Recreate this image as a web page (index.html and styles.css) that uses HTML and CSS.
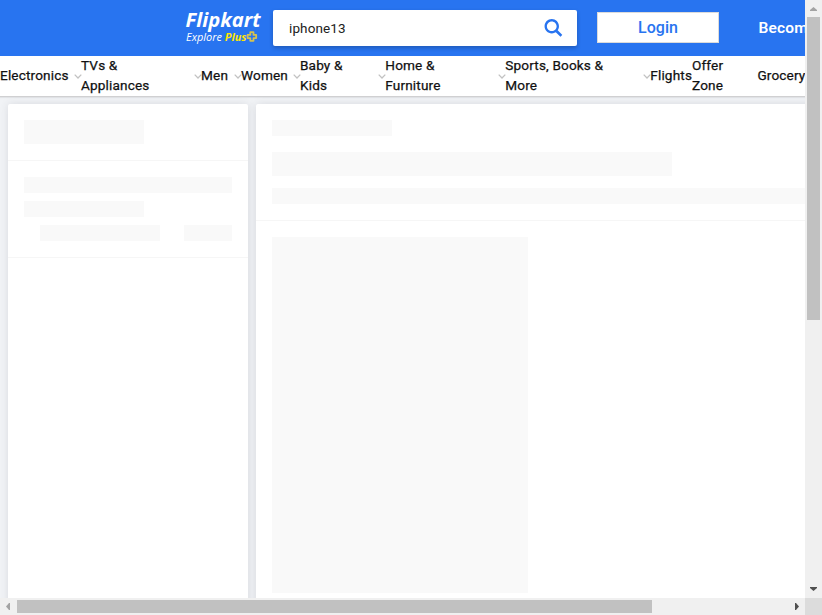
FILE: index.html
```html
<!DOCTYPE html>
<html lang="en">
<head>
<meta charset="utf-8">
<title>iphone13 - Flipkart</title>
<link rel="stylesheet" href="styles.css">
</head>
<body>
<div class="window">
  <div class="viewport">
    <header class="header">
      <a class="brand">
        <svg class="logo" width="82" height="40" viewBox="0 -4 82 40">
          <text class="logo-name" x="1.5" y="18.5" textLength="75" lengthAdjust="spacingAndGlyphs">Flipkart</text>
          <text class="logo-sub" x="2" y="33" textLength="60.5" lengthAdjust="spacingAndGlyphs">Explore <tspan class="logo-plus">Plus</tspan></text>
          <path class="logo-star" d="M66.3 24.2h3.2v2.7h2.7v3.2h-2.7v2.7h-3.2v-2.7h-2.7v-3.2h2.7z"/>
        </svg>
      </a>
      <div class="search">
        <span>iphone13</span>
        <svg width="20" height="20" viewBox="0 0 17 18"><g fill="#2874f0" fill-rule="evenodd"><path d="m11.618 9.897l4.225 4.212c.092.092.101.232.02.313l-1.465 1.46c-.081.081-.221.072-.314-.02l-4.216-4.203"/><path d="m6.486 10.901c-2.42 0-4.381-1.956-4.381-4.368 0-2.413 1.961-4.369 4.381-4.369 2.42 0 4.381 1.956 4.381 4.369 0 2.413-1.961 4.368-4.381 4.368m0-10.835c-3.582 0-6.486 2.895-6.486 6.467 0 3.572 2.904 6.467 6.486 6.467 3.582 0 6.486-2.895 6.486-6.467 0-3.572-2.904-6.467-6.486-6.467"/></g></svg>
      </div>
      <a class="login">Login</a>
      <a class="seller">Become a Seller</a>
    </header>
    <nav class="nav">
      <div class="item electronics"><span>Electronics</span><svg class="chev" viewBox="0 0 8 5"><path d="M.7.6 4 4 7.3.6"/></svg></div>
      <div class="item tvs"><span>TVs &amp;<br>Appliances</span><svg class="chev" viewBox="0 0 8 5"><path d="M.7.6 4 4 7.3.6"/></svg></div>
      <div class="item men"><span>Men</span><svg class="chev" viewBox="0 0 8 5"><path d="M.7.6 4 4 7.3.6"/></svg></div>
      <div class="item women"><span>Women</span><svg class="chev" viewBox="0 0 8 5"><path d="M.7.6 4 4 7.3.6"/></svg></div>
      <div class="item baby"><span>Baby &amp;<br>Kids</span><svg class="chev" viewBox="0 0 8 5"><path d="M.7.6 4 4 7.3.6"/></svg></div>
      <div class="item home"><span>Home &amp;<br>Furniture</span><svg class="chev" viewBox="0 0 8 5"><path d="M.7.6 4 4 7.3.6"/></svg></div>
      <div class="item sports"><span>Sports, Books &amp;<br>More</span><svg class="chev" viewBox="0 0 8 5"><path d="M.7.6 4 4 7.3.6"/></svg></div>
      <div class="item flights"><span>Flights</span></div>
      <div class="item offer"><span>Offer<br>Zone</span></div>
      <div class="item"><span>Grocery</span></div>
    </nav>
    <main class="content">
      <aside class="card filters">
        <div class="section"><div class="bone w120 tall"></div></div>
        <div class="section stack">
          <div class="bone"></div>
          <div class="bone w120"></div>
          <div class="pair"><div class="bone w120"></div><div class="bone w48"></div></div>
        </div>
      </aside>
      <section class="card results">
        <div class="section">
          <div class="bone w120"></div>
          <div class="bone w400 tall title"></div>
          <div class="bone wide"></div>
        </div>
        <div class="section last"><div class="bone product"></div></div>
      </section>
    </main>
  </div>
  <div class="bar vertical">
    <svg width="17" height="17"><path fill="#a3a3a3" d="M5 11h7v-1L8.5 7 5 10z"/></svg>
    <div class="thumb"></div>
    <svg class="end" width="17" height="17"><path fill="#505050" d="M5 6h7v1L8.5 10 5 7z"/></svg>
  </div>
  <div class="bar horizontal">
    <svg width="17" height="17"><path fill="#a3a3a3" d="M10 5v7H9L6 8.5 9 5z"/></svg>
    <div class="thumb"></div>
    <svg class="end" width="17" height="17"><path fill="#505050" d="M7 5v7h1l3-3.5L8 5z"/></svg>
  </div>
  <div class="corner"></div>
</div>
</body>
</html>
```
FILE: styles.css
```css
* { box-sizing: border-box; }
body { margin: 0; font-family: Roboto, "Liberation Sans", sans-serif; font-size: 14px; color: #212121; overflow: hidden; }
svg { display: block; flex: none; }
.window { display: grid; grid-template: 598px 17px / 805px 17px; width: 822px; height: 615px; overflow: hidden; }
.viewport { overflow: hidden; background: #f1f3f6; display: flex; flex-direction: column; }
.header { flex: none; height: 56px; background: #2874f0; display: flex; align-items: center; padding-left: 184px; overflow: hidden; }
.brand { width: 89px; flex: none; padding-bottom: 8px; }
.logo { overflow: visible; }
.logo text { font-family: "Open Sans", "Noto Sans", sans-serif; font-style: italic; }
.logo .logo-name { font-size: 20px; font-weight: 700; fill: #fff; }
.logo .logo-sub { font-size: 11px; font-weight: 500; fill: #fff; }
.logo .logo-plus { font-weight: 700; fill: #ffe500; }
.logo-star { fill: none; stroke: #d4c252; stroke-width: 1.8; stroke-linejoin: round; }
.search { flex: none; width: 304px; height: 36px; background: #fff; border-radius: 2px; box-shadow: 0 2px 4px 0 rgba(0,0,0,.23); display: flex; align-items: center; justify-content: space-between; padding: 0 13px 0 16px; color: #212121; font-size: 13.5px; letter-spacing: .12px; }
.search svg { margin-top: 1px; }
.login { flex: none; width: 122px; height: 31px; margin: 0 39.5px 1px 20px; background: #fff; border: 1px solid #dbdbdb; color: #2874f0; font-size: 16px; font-weight: 500; line-height: 29px; text-align: center; }
.seller { flex: none; color: #fff; font-size: 15.5px; letter-spacing: .2px; font-weight: 600; white-space: nowrap; }
.nav { flex: none; height: 41px; display: flex; background: #fff; border-bottom: 1px solid #d0d0d2; box-shadow: 0 1px 1px rgba(0,0,0,.06); font-size: 13.6px; font-weight: 400; -webkit-text-stroke: .25px #111; line-height: 20px; letter-spacing: .15px; color: #111; white-space: nowrap; position: relative; }
.item { display: flex; flex: none; align-items: center; justify-content: space-between; }
.item span { margin-top: -1px; margin-bottom: 1px; }
.chev { width: 8px; height: 5px; fill: none; stroke: #c2c2c2; stroke-width: 1.3; margin-right: -1px; }
.electronics { width: 81px; }
.tvs { width: 120px; }
.men { width: 40px; }
.women { width: 59px; }
.baby { width: 85.3px; }
.home { width: 120px; }
.sports { width: 145px; }
.flights { width: 41.7px; }
.offer { width: 65.4px; }
.content { flex: 1; display: flex; gap: 8px; padding: 7px 0 0 8px; min-height: 0; }
.card { flex: none; height: 700px; background: #fff; border-radius: 2px; box-shadow: 0 0 8px rgba(60,60,80,.13); }
.filters { width: 240px; }
.results { width: 984px; }
.section { padding: 16px; border-bottom: 1px solid #f6f6f6; }
.bone { height: 16px; background: #f9f9f9; }
.tall { height: 24px; }
.w120 { width: 120px; }
.w48 { width: 48px; }
.w400 { width: 400px; }
.stack { display: grid; gap: 8px; }
.pair { display: flex; justify-content: space-between; padding-left: 16px; }
.title { margin: 16px 0 12px; }
.last { border: 0; }
.product { width: 256px; height: 356px; }
.bar { background: #f0f0f0; display: flex; }
.vertical { flex-direction: column; }
.thumb { background: #c1c1c1; flex: none; }
.vertical .thumb { width: 13px; height: 303px; margin-left: 2px; }
.horizontal .thumb { width: 635px; height: 13px; margin-top: 2px; }
.vertical .end { margin-top: auto; }
.horizontal .end { margin-left: auto; }
.corner { background: #dcdcdc; }
```
